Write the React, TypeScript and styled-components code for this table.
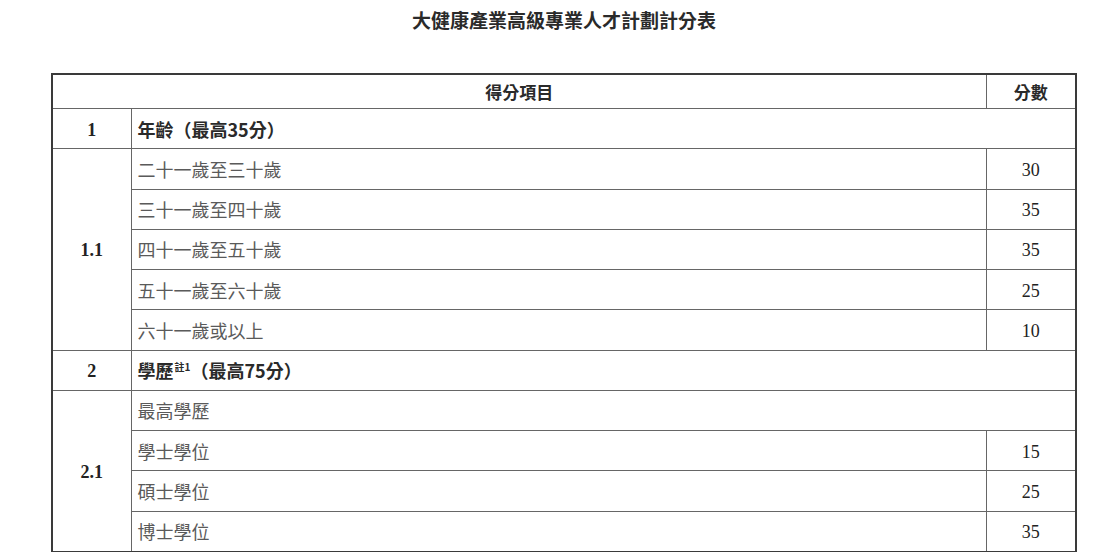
import React from "react";
import styled, { createGlobalStyle } from "styled-components";

const GlobalStyle = createGlobalStyle`
  html, body {
    margin: 0;
    padding: 0;
    background: #fff;
  }
  body {
    font-family: "Noto Sans CJK TC", "Noto Sans", sans-serif;
    color: #222;
  }
`;

const Page = styled.div`
  width: 1114px;
  height: 552px;
  overflow: hidden;
  padding: 8px 37px 0 51px;
  box-sizing: border-box;
`;

const Title = styled.h1`
  margin: 0 0 41px;
  height: 24px;
  line-height: 24px;
  text-align: center;
  font-size: 19px;
  font-weight: 700;
  color: #2a2a2a;
`;

const Table = styled.table`
  width: 1026px;
  border-collapse: collapse;
  border: 2px solid #3a3a3a;
  table-layout: fixed;
`;

const HeadCell = styled.th`
  height: 33px;
  padding: 0;
  border: 1px solid #666;
  font-size: 17px;
  font-weight: 700;
  color: #2a2a2a;
  text-align: center;
`;

const NumCell = styled.td<{ $bold?: boolean }>`
  height: 39.25px;
  padding: 3px 0 0;
  box-sizing: border-box;
  border: 1px solid #666;
  text-align: center;
  font-family: "Liberation Serif", "Times New Roman", serif;
  font-size: 18px;
  font-weight: ${(p) => (p.$bold ? 700 : 400)};
  color: #222;
`;

const ItemCell = styled.td<{ $heading?: boolean }>`
  height: 39.25px;
  padding: 0 6px;
  border: 1px solid #666;
  font-size: 18px;
  font-weight: ${(p) => (p.$heading ? 700 : 400)};
  color: ${(p) => (p.$heading ? "#2a2a2a" : "#5a5a5a")};
`;

const Note = styled.sup`
  font-size: 10px;
  font-weight: 700;
  vertical-align: 7px;
  margin-left: 1px;
  color: #2a2a2a;
`;

interface Group {
  no: string;
  title: React.ReactNode;
  sub: string;
  items: { label: string; score?: number }[];
}

const groups: Group[] = [
  {
    no: "1",
    title: "年齡（最高35分）",
    sub: "1.1",
    items: [
      { label: "二十一歲至三十歲", score: 30 },
      { label: "三十一歲至四十歲", score: 35 },
      { label: "四十一歲至五十歲", score: 35 },
      { label: "五十一歲至六十歲", score: 25 },
      { label: "六十一歲或以上", score: 10 },
    ],
  },
  {
    no: "2",
    title: (
      <>
        學歷<Note>註1</Note>（最高75分）
      </>
    ),
    sub: "2.1",
    items: [
      { label: "最高學歷" },
      { label: "學士學位", score: 15 },
      { label: "碩士學位", score: 25 },
      { label: "博士學位", score: 35 },
    ],
  },
];

export default function App() {
  return (
    <>
      <GlobalStyle />
      <Page>
        <Title>大健康產業高級專業人才計劃計分表</Title>
        <Table>
          <colgroup>
            <col style={{ width: 79 }} />
            <col />
            <col style={{ width: 90 }} />
          </colgroup>
          <thead>
            <tr>
              <HeadCell colSpan={2}>得分項目</HeadCell>
              <HeadCell>分數</HeadCell>
            </tr>
          </thead>
          <tbody>
            {groups.map((g) => (
              <React.Fragment key={g.no}>
                <tr>
                  <NumCell $bold>{g.no}</NumCell>
                  <ItemCell $heading colSpan={2}>
                    {g.title}
                  </ItemCell>
                </tr>
                {g.items.map((it, i) => (
                  <tr key={it.label}>
                    {i === 0 && (
                      <NumCell $bold rowSpan={g.items.length}>
                        {g.sub}
                      </NumCell>
                    )}
                    <ItemCell colSpan={it.score === undefined ? 2 : 1}>
                      {it.label}
                    </ItemCell>
                    {it.score !== undefined && <NumCell>{it.score}</NumCell>}
                  </tr>
                ))}
              </React.Fragment>
            ))}
          </tbody>
        </Table>
      </Page>
    </>
  );
}
